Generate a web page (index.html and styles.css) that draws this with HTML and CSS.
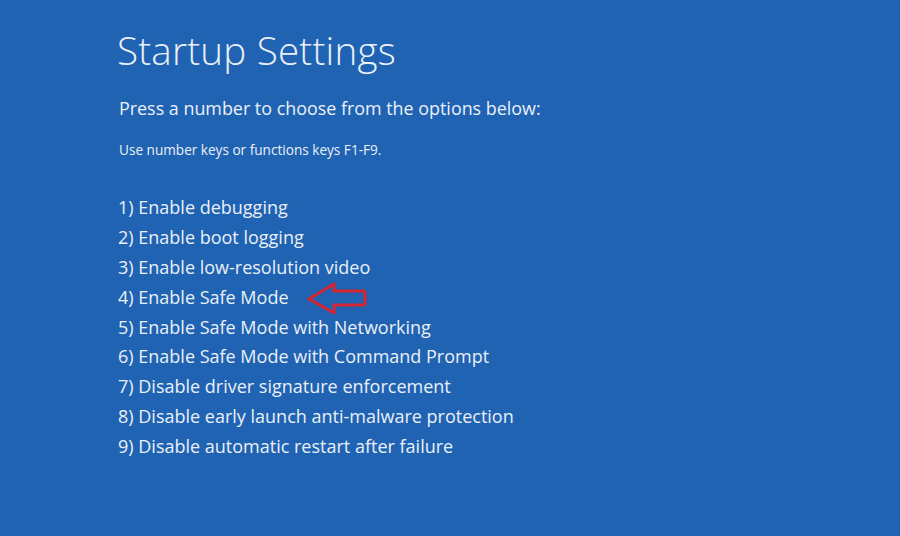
FILE: index.html
```html
<!DOCTYPE html>
<html>
<head>
<meta charset="utf-8">
<link rel="stylesheet" href="styles.css">
</head>
<body>
<main class="screen">
  <h1 class="title">Startup Settings</h1>
  <p class="lead">Press a number to choose from the options below:</p>
  <p class="hint">Use number keys or functions keys F1-F9.</p>
  <ul class="options">
    <li>1) Enable debugging</li>
    <li>2) Enable boot logging</li>
    <li>3) Enable low-resolution video</li>
    <li class="marked">4) Enable Safe Mode
      <svg class="arrow" width="60" height="34" viewBox="0 0 60 34">
        <path d="M2 18 L27 3 L27 10 L56 10 Q58 10 58 12 L58 22 Q58 24 56 24 L27 24 L27 32 Z" fill="none" stroke="#d6262f" stroke-width="3" stroke-linejoin="round"/>
      </svg>
    </li>
    <li>5) Enable Safe Mode with Networking</li>
    <li>6) Enable Safe Mode with Command Prompt</li>
    <li>7) Disable driver signature enforcement</li>
    <li>8) Disable early launch anti-malware protection</li>
    <li>9) Disable automatic restart after failure</li>
  </ul>
</main>
</body>
</html>
```
FILE: styles.css
```css
html, body {
  margin: 0;
  padding: 0;
  background: #2063b2;
}
.screen {
  width: 900px;
  height: 536px;
  box-sizing: border-box;
  padding: 24px 0 0 117px;
  background: #2063b2;
  color: #eaf0f8;
  font-family: "Open Sans", "Noto Sans", sans-serif;
}
.title {
  margin: 0;
  font-size: 38.6px;
  font-weight: 300;
  line-height: 52px;
  letter-spacing: 0.2px;
}
.lead {
  margin: 19px 0 0 2px;
  font-size: 17.9px;
  line-height: 26px;
}
.hint {
  margin: 20px 0 0 2px;
  font-size: 13.6px;
  line-height: 18px;
}
.options {
  list-style: none;
  margin: 33px 0 0 1px;
  padding: 0;
  font-size: 18px;
  line-height: 30px;
}
.options li {
  display: flex;
  align-items: center;
  height: 29.9px;
}
.arrow {
  margin-left: 18px;
  margin-top: 2px;
}
```
